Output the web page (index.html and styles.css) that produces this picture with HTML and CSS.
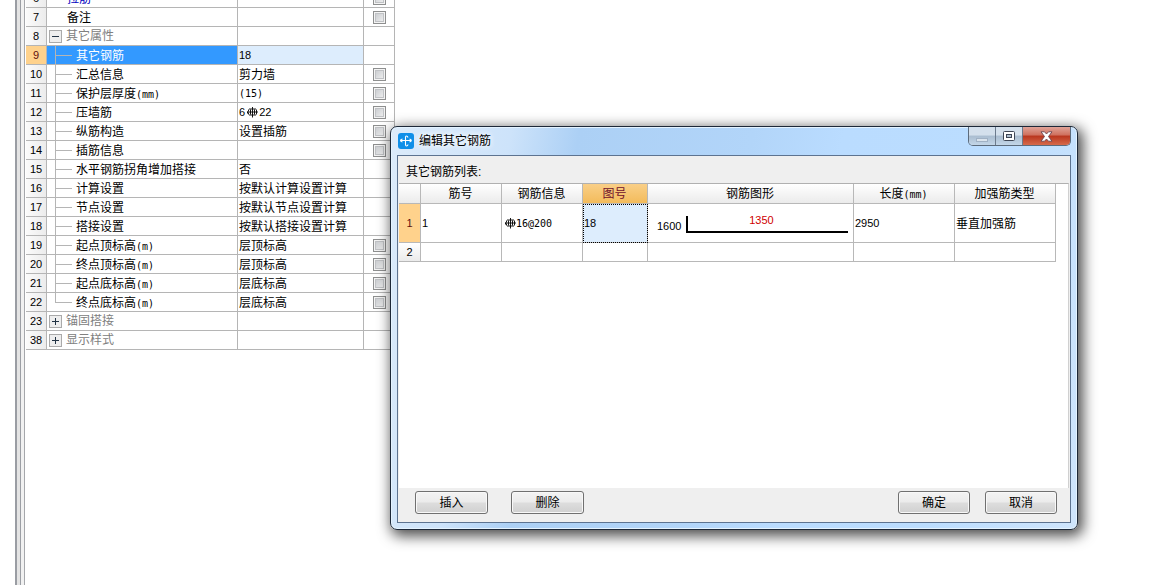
FILE: index.html
```html
<!DOCTYPE html>
<html lang="zh-CN">
<head>
<meta charset="utf-8">
<title>编辑其它钢筋</title>
<link rel="stylesheet" href="styles.css">
</head>
<body>
<svg width="0" height="0" class="defs" aria-hidden="true">
  <symbol id="rebar" viewBox="0 0 11 11"><path d="M5.500 0v11M3.500 3v5M7.500 3v5M2 2.500h7M2 8.500h7M1.500 3v2M.5 5v2M1.500 6v2M9.500 3v5M0 5.500h11" transform="translate(0 -.5)" fill="none" stroke="#000" stroke-width=".9"/></symbol>
</svg>
<main class="workspace">
  <div class="splitter"></div>
  <section class="properties">
    <table class="props">
      <colgroup><col class="c-index"><col class="c-name"><col class="c-value"><col class="c-check"></colgroup>
      <tbody id="rows">
        <tr><th>6</th><td class="plain link">拉筋</td><td></td><td class="tick"><input type="checkbox" aria-label="拉筋"></td></tr>
        <tr><th>7</th><td class="plain">备注</td><td></td><td class="tick"><input type="checkbox" aria-label="备注"></td></tr>
        <tr><th>8</th><td class="group"><button class="toggle minus" aria-label="折叠"></button>其它属性</td><td></td><td></td></tr>
        <tr class="current"><th>9</th><td class="leaf">其它钢筋</td><td class="n">18</td><td></td></tr>
        <tr><th>10</th><td class="leaf">汇总信息</td><td>剪力墙</td><td class="tick"><input type="checkbox" aria-label="汇总信息"></td></tr>
        <tr><th>11</th><td class="leaf">保护层厚度<span class="unit">(mm)</span></td><td class="n"><span class="unit">(15)</span></td><td class="tick"><input type="checkbox" aria-label="保护层厚度"></td></tr>
        <tr><th>12</th><td class="leaf">压墙筋</td><td class="n">6<svg class="rebar spaced"><use href="#rebar"/></svg>22</td><td class="tick"><input type="checkbox" aria-label="压墙筋"></td></tr>
        <tr><th>13</th><td class="leaf">纵筋构造</td><td>设置插筋</td><td class="tick"><input type="checkbox" aria-label="纵筋构造"></td></tr>
        <tr><th>14</th><td class="leaf">插筋信息</td><td></td><td class="tick"><input type="checkbox" aria-label="插筋信息"></td></tr>
        <tr><th>15</th><td class="leaf">水平钢筋拐角增加搭接</td><td>否</td><td></td></tr>
        <tr><th>16</th><td class="leaf">计算设置</td><td>按默认计算设置计算</td><td></td></tr>
        <tr><th>17</th><td class="leaf">节点设置</td><td>按默认节点设置计算</td><td></td></tr>
        <tr><th>18</th><td class="leaf">搭接设置</td><td>按默认搭接设置计算</td><td></td></tr>
        <tr><th>19</th><td class="leaf">起点顶标高<span class="unit">(m)</span></td><td>层顶标高</td><td class="tick"><input type="checkbox" aria-label="起点顶标高"></td></tr>
        <tr><th>20</th><td class="leaf">终点顶标高<span class="unit">(m)</span></td><td>层顶标高</td><td class="tick"><input type="checkbox" aria-label="终点顶标高"></td></tr>
        <tr><th>21</th><td class="leaf">起点底标高<span class="unit">(m)</span></td><td>层底标高</td><td class="tick"><input type="checkbox" aria-label="起点底标高"></td></tr>
        <tr><th>22</th><td class="leaf last">终点底标高<span class="unit">(m)</span></td><td>层底标高</td><td class="tick"><input type="checkbox" aria-label="终点底标高"></td></tr>
        <tr><th>23</th><td class="group"><button class="toggle plus" aria-label="展开"></button>锚固搭接</td><td></td><td></td></tr>
        <tr><th>38</th><td class="group"><button class="toggle plus" aria-label="展开"></button>显示样式</td><td></td><td></td></tr>
      </tbody>
    </table>
  </section>
</main>

<div class="dialog" role="dialog" aria-labelledby="dialog-title">
  <header class="titlebar">
    <svg class="app-icon" viewBox="0 0 16 16"><rect width="16" height="16" rx="3" fill="#0f8fe8"/><path d="M10 4.500Q9.500 3 8.300 3 7.500 3 7.500 4.500v7Q7.500 13 8.500 13 9.800 13 10 11.500M4.500 6Q2.500 6.500 2.500 7.500T4.500 9M2.500 7.500h10.500M11.500 6Q13.300 6.500 13.300 7.500T11.500 9" fill="none" stroke="#fff" stroke-width="1.100"/></svg>
    <h1 id="dialog-title">编辑其它钢筋</h1>
    <div class="controls">
      <button class="ctl min" aria-label="最小化"><svg width="14" height="8" viewBox="0 0 14 8"><rect x="1.500" y="3.500" width="11" height="3" fill="#dbe4ed" stroke="#a0b1c4"/></svg></button>
      <button class="ctl max" aria-label="最大化"><svg width="12" height="10" viewBox="0 0 12 10"><rect x=".5" y=".5" width="11" height="9" rx="1" fill="#fff" stroke="#3f4655"/><rect x="3.500" y="3.500" width="5" height="3" fill="#aebfd0" stroke="#3f4655"/></svg></button>
      <button class="ctl close" aria-label="关闭"><svg width="13" height="11" viewBox="0 0 13 11"><path d="M1 .8h3.500l2 2.200 2-2.200H12L8.500 5.500 12 10.200H8.500l-2-2.200-2 2.200H1l3.500-4.700z" fill="#fff" stroke="#6b4450" stroke-width=".9"/></svg></button>
    </div>
  </header>
  <div class="client">
    <p class="caption">其它钢筋列表:</p>
    <div class="list">
      <table class="bars">
        <colgroup><col class="b-index"><col class="b-no"><col class="b-info"><col class="b-fig"><col class="b-shape"><col class="b-len"><col class="b-type"></colgroup>
        <thead>
          <tr><th></th><th>筋号</th><th>钢筋信息</th><th class="active">图号</th><th>钢筋图形</th><th>长度<span class="unit">(mm)</span></th><th>加强筋类型</th></tr>
        </thead>
        <tbody>
          <tr class="tall"><th class="active">1</th><td>1</td><td class="info"><svg class="rebar"><use href="#rebar"/></svg><span class="unit">16@200</span></td><td class="picked">18</td>
            <td class="shape"><div class="drawing"><span class="side">1600</span><span class="run">1350</span></div></td><td>2950</td><td class="han">垂直加强筋</td></tr>
          <tr class="short"><th>2</th><td></td><td></td><td></td><td></td><td></td><td></td></tr>
        </tbody>
      </table>
    </div>
    <footer class="actions">
      <button class="btn">插入</button>
      <button class="btn">删除</button>
      <span class="grow"></span>
      <button class="btn end">确定</button>
      <button class="btn end">取消</button>
    </footer>
  </div>
</div>
</body>
</html>
```

FILE: styles.css
```css
* { box-sizing: border-box; }
body {
  margin: 0;
  overflow: hidden;
  background: #fff;
  color: #000;
  font: 12px/18px "Liberation Sans", "Noto Sans CJK SC", sans-serif;
}
.defs { position: absolute; }
button, input { font: inherit; margin: 0; padding: 0; }
table { border-collapse: separate; border-spacing: 0; table-layout: fixed; }
th { font-weight: normal; }
.unit { font: 10px/12px "DejaVu Sans Mono", monospace; }
.n, .props th { font-size: 11px; }
.rebar { width: 11px; height: 11px; vertical-align: -2px; }
.rebar.spaced { margin: 0 1px 0 2px; }

/* property grid */
.workspace { display: flex; height: 100vh; padding-left: 15px; overflow: hidden; }
.splitter {
  flex: none;
  width: 10px;
  border-left: 2px solid #9a9da3;
  border-right: 1px solid #a5a7ab;
  background: linear-gradient(90deg, #e4e4e4 0 3px, #9b9ea4 3px 4px, #f1f1f1 4px);
}
.properties { padding-left: 1px; }
.props { width: 369px; margin-top: -11px; }
.c-index { width: 21px; }
.c-name { width: 191px; }
.c-value { width: 126px; }
.c-check { width: 31px; }
.props th, .props td {
  height: 19px;
  padding: 2px 0 0 1px;
  border-right: 1px solid #b5b5b5;
  border-bottom: 1px solid #b5b5b5;
  line-height: 16px;
  white-space: nowrap;
}
.props th, .props .n { padding-top: 0; line-height: 18px; }
.props th {
  padding: 0;
  text-align: center;
  background: linear-gradient(90deg, #fbfbfb, #ececec);
}
.props .plain { padding-left: 20px; }
.props .link { color: #0000c0; }
.props .group { padding: 0 0 0 2px; line-height: 18px; color: #808080; }
.props .leaf {
  padding-left: 29px;
  background:
    linear-gradient(#b5b5b5, #b5b5b5) 8px 0 / 1px 100% no-repeat,
    linear-gradient(#b5b5b5, #b5b5b5) 8px 9px / 17px 1px no-repeat;
}
.props .leaf.last { background-size: 1px 10px, 17px 1px; }
.props .current th { background: #ffd28c; color: #601010; }
.props .current .leaf { background-color: #3399ff; color: #fff; }
.props .current .n { background: #ddedfd; }
.toggle {
  width: 13px;
  height: 13px;
  margin-right: 4px;
  border: 1px solid #aaa;
  vertical-align: -2px;
  background-color: #eee;
  background-repeat: no-repeat;
  background-position: center;
  background-image: linear-gradient(#234, #234), linear-gradient(#234, #234);
}
.minus { background-size: 7px 1px, 0 0; }
.plus { background-size: 7px 1px, 1px 7px; }
.props .tick { padding: 0; text-align: center; line-height: 0; }
.tick input {
  appearance: none;
  width: 13px;
  height: 13px;
  border: 1px solid #8e8f8f;
  background: linear-gradient(135deg, #c4c7cb, #f4f4f4);
  box-shadow: inset 0 0 0 1px #f4f4f4, inset 0 0 0 2px #c0c2c5;
  vertical-align: middle;
}

/* floating window */
.dialog {
  position: absolute;
  top: 126px;
  left: 390px;
  right: 91px;
  padding: 0 6px 6px;
  border: 1px solid #1d2838;
  border-radius: 7px;
  background: linear-gradient(100deg, #dcebfa 0, #cde3fa 16%, #acd0f5 25%, #b2d5f9 48%, #badcff 60%, #bbddff 80%, #cfe5fc 100%);
  box-shadow: inset 0 0 0 1px #e4f3ff, 3px 4px 14px 2px rgba(0, 0, 0, .7);
}
.titlebar { display: flex; align-items: center; height: 28px; }
.app-icon { width: 16px; height: 16px; margin: 0 5px 0 1px; }
.titlebar h1 { margin: 0; font-size: 12px; font-weight: normal; line-height: 18px; flex: 1; text-shadow: 0 0 6px #fff, 0 0 6px #fff; }
.controls {
  display: flex;
  align-self: flex-start;
  height: 19px;
  border: 1px solid #5c6b7c;
  border-top: 0;
  border-radius: 0 0 5px 5px;
  overflow: hidden;
}
.ctl {
  display: flex;
  align-items: center;
  justify-content: center;
  width: 27px;
  border: 0;
  border-right: 1px solid #6c7b8d;
  background: linear-gradient(#d4e0ec 0 45%, #aabdd0 50%, #c3d6e8);
}
.ctl.min { padding-top: 5px; }
.ctl.close { width: 47px; border-right: 0; background: linear-gradient(#e0a398, #cf705d 45%, #b9361e 50%, #d66a4b); }
.client { border: 1px solid #5d7390; background: #efefef; }
.caption { margin: 0; padding: 7px 8px 2px; }
.list { height: 305px; margin: 0 1px; border-top: 1px solid #b0b0b0; border-right: 1px solid #d0d0d0; background: #fff; }
.bars { width: 657px; font-size: 11px; }
.b-index { width: 22px; }
.b-no, .b-info { width: 81px; }
.b-fig { width: 65px; }
.b-shape { width: 206px; }
.b-len, .b-type { width: 101px; }
.bars th, .bars td {
  height: 20px;
  padding: 0 0 0 1px;
  border-right: 1px solid #b8b8b8;
  border-bottom: 1px solid #b8b8b8;
  line-height: 18px;
  white-space: nowrap;
  text-align: left;
}
.bars th { padding: 0; text-align: center; background: linear-gradient(#fff, #ebebeb); }
.bars thead th { padding: 2px 1px 0 0; font-size: 12px; line-height: 17px; }
.bars .tall > * { height: 39px; }
.bars .short > * { height: 19px; }
.bars .info { padding-left: 3px; }
.bars .han { padding-top: 2px; font-size: 12px; }
.bars thead .active { background: linear-gradient(#f9cf87, #f3bb5b); color: #70102c; }
.bars tbody .active { background: #ffd28c; color: #601010; }
.bars .picked { background: #ddedfd; outline: 1px dotted #000; outline-offset: -1px; }
.bars .shape { padding: 3px 5px 0 9px; }
.drawing { display: flex; align-items: flex-end; }
.side { width: 29px; line-height: 14px; }
.run {
  flex: 1;
  height: 17px;
  padding-right: 13px;
  border-left: 2px solid #000;
  border-bottom: 2px solid #000;
  color: #d00000;
  line-height: 8px;
  text-align: center;
}
.actions { display: flex; padding: 3px 13px 8px 17px; }
.btn {
  width: 73px;
  height: 23px;
  margin-right: 23px;
  border: 1px solid #707070;
  border-radius: 3px;
  background: linear-gradient(#f3f3f3, #ebebeb 48%, #dddddd 52%, #d0d0d0);
  box-shadow: inset 0 0 0 1px #f8f8f8;
  line-height: 18px;
}
.btn.end { width: 72px; margin-right: 15px; }
.btn.end:last-child { margin-right: 0; }
.grow { flex: 1; }
```
